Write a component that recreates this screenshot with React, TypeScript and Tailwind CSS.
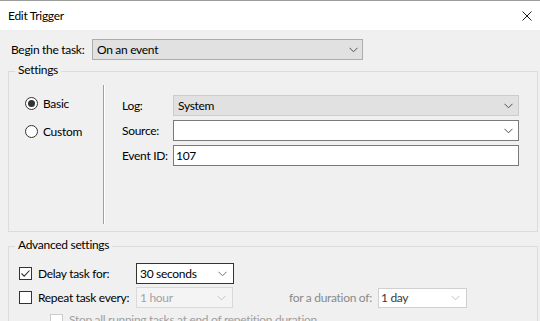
import React from "react";

const Chevron = ({ color = "#505050" }: { color?: string }) => (
  <svg width="9" height="6" viewBox="0 0 9 6" className="shrink-0">
    <path d="M0.5 0.8 L4.5 4.8 L8.5 0.8" fill="none" stroke={color} strokeWidth="1" />
  </svg>
);

const Radio = ({ checked }: { checked?: boolean }) => (
  <div className="w-[13px] h-[13px] rounded-full border border-[#333333] bg-white flex items-center justify-center shrink-0">
    {checked && <div className="w-[7px] h-[7px] rounded-full bg-[#333333]" />}
  </div>
);

const Check = ({ checked, disabled }: { checked?: boolean; disabled?: boolean }) => (
  <div
    className={`w-[13px] h-[13px] shrink-0 border ${disabled ? "border-[#cccccc]" : "border-[#333333]"} bg-white flex items-center justify-center`}
  >
    {checked && (
      <svg width="11" height="11" viewBox="0 0 11 11">
        <path d="M1.5 5.5 L4.2 8.2 L9.5 2.5" fill="none" stroke="#333333" strokeWidth="1.1" />
      </svg>
    )}
  </div>
);

export default function App() {
  return (
    <div
      className="w-[540px] h-[321px] overflow-hidden bg-[#f0f0f0] text-[12px] tracking-[-0.3px] text-black leading-none whitespace-nowrap"
      style={{ fontFamily: 'Lato, "Noto Sans", sans-serif' }}
    >
      {/* title bar */}
      <div className="h-[30px] bg-white border-t border-[#9c9c9c] flex items-center justify-between pl-[8px] pr-[4px]">
        <span className="text-[12px]">Edit Trigger</span>
        <svg width="10" height="10" viewBox="0 0 10 10" className="mr-[4px]">
          <path d="M0.5 0.5 L9.5 9.5 M9.5 0.5 L0.5 9.5" stroke="#1a1a1a" strokeWidth="1" />
        </svg>
      </div>

      {/* Begin the task */}
      <div className="flex items-center h-[21px] mt-[9px] pl-[11px]">
        <span className="w-[81px]">Begin the task:</span>
        <div className="w-[271px] h-[21px] border border-[#adadad] bg-[#e1e1e1] flex items-center justify-between pl-[4px] pr-[4px]">
          <span>On an event</span>
          <Chevron />
        </div>
      </div>

      {/* Settings group */}
      <div className="relative ml-[8px] mt-[11px] w-[530px] h-[161px] border border-[#dcdcdc] flex">
        <span className="absolute left-[6px] top-[-8px] bg-[#f0f0f0] px-[3px]">Settings</span>
        <div className="w-[94px] pl-[16px] pt-[25px] flex flex-col gap-[15px]">
          <div className="flex items-center gap-[5px]">
            <Radio checked />
            <span>Basic</span>
          </div>
          <div className="flex items-center gap-[5px]">
            <Radio />
            <span>Custom</span>
          </div>
        </div>
        <div className="mt-[13px] h-[139px] w-[2px] border-l border-[#a0a0a0] border-r border-r-white" />
        <div className="pl-[17px] pt-[23px] flex flex-col gap-[4px]">
          <div className="flex items-center h-[21px]">
            <span className="w-[51px]">Log:</span>
            <div className="w-[346px] h-[21px] border border-[#cccccc] bg-[#e1e1e1] flex items-center justify-between pl-[4px] pr-[5px]">
              <span>System</span>
              <Chevron />
            </div>
          </div>
          <div className="flex items-center h-[21px]">
            <span className="w-[51px]">Source:</span>
            <div className="w-[346px] h-[21px] border border-[#7a7a7a] bg-white flex items-center justify-end pr-[5px]">
              <Chevron />
            </div>
          </div>
          <div className="flex items-center h-[21px]">
            <span className="w-[51px]">Event ID:</span>
            <div className="w-[346px] h-[21px] border border-[#7a7a7a] bg-white flex items-center pl-[2px]">
              <span>107</span>
            </div>
          </div>
        </div>
      </div>

      {/* Advanced settings group */}
      <div className="relative ml-[8px] mt-[14px] w-[530px] h-[100px] border border-[#dcdcdc]">
        <span className="absolute left-[6px] top-[-8px] bg-[#f0f0f0] px-[3px]">Advanced settings</span>
        <div className="pl-[10px] pt-[16px] flex flex-col gap-[3px]">
          <div className="flex items-center h-[21px]">
            <Check checked />
            <span className="ml-[6px] w-[98px]">Delay task for:</span>
            <div className="w-[98px] h-[21px] border border-[#333333] bg-white flex items-center justify-between pl-[3px] pr-[6px]">
              <span>30 seconds</span>
              <Chevron color="#707070" />
            </div>
          </div>
          <div className="flex items-center h-[21px]">
            <Check />
            <span className="ml-[6px] w-[98px]">Repeat task every:</span>
            <div className="w-[97px] h-[21px] border border-[#d9d9d9] bg-[#f4f4f4] flex items-center justify-between pl-[3px] pr-[6px] text-[#a3a3a3]">
              <span>1 hour</span>
              <Chevron color="#c4c4c4" />
            </div>
            <span className="ml-[56px] w-[89px] text-[#8a8a8a]">for a duration of:</span>
            <div className="w-[89px] h-[20px] border border-[#d0d0d0] bg-white flex items-center justify-between pl-[2px] pr-[6px] text-[#3a3a3a]">
              <span>1 day</span>
              <Chevron color="#c4c4c4" />
            </div>
          </div>
          <div className="flex items-center h-[16px] pl-[31px] mt-[1px]">
            <Check disabled />
            <span className="ml-[6px] text-[#a0a0a0]">Stop all running tasks at end of repetition duration</span>
          </div>
        </div>
      </div>
    </div>
  );
}
